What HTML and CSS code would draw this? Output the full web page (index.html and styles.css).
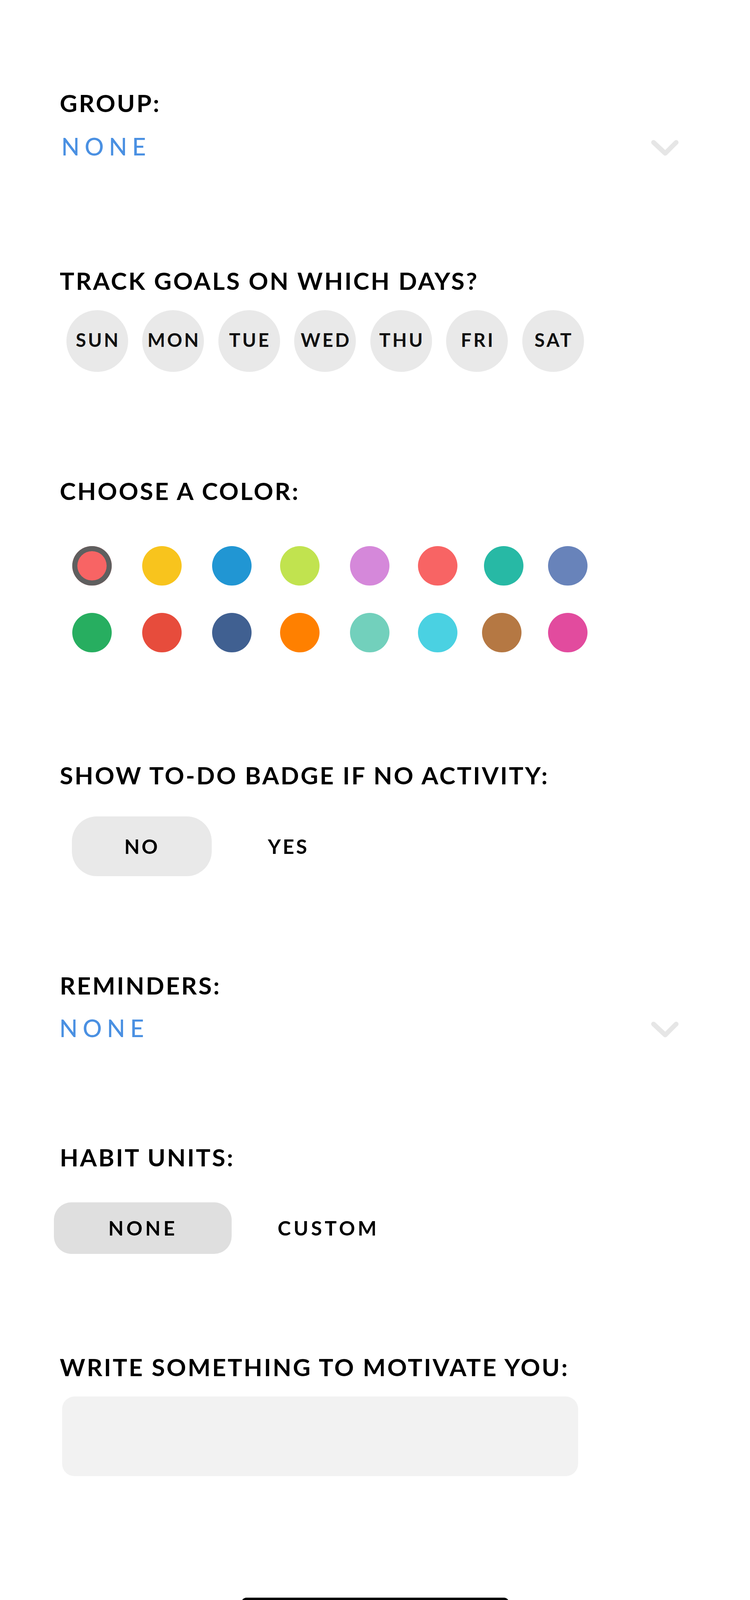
FILE: index.html
```html
<!DOCTYPE html>
<html lang="en">
<head>
<meta charset="utf-8">
<title>Habit settings</title>
<link rel="stylesheet" href="styles.css">
</head>
<body>
<div class="screen">
  <div class="label label-first">GROUP:</div>
  <div class="select select-group">
    <span class="select-value">NONE</span>
    <svg class="chevron" viewBox="0 0 90 61" width="90" height="61" aria-hidden="true"><polyline points="15,20.5 45,48.5 73,20.5"/></svg>
  </div>

  <div class="label label-days">TRACK GOALS ON WHICH DAYS?</div>
  <div class="days">
    <div class="day">SUN</div>
    <div class="day">MON</div>
    <div class="day">TUE</div>
    <div class="day">WED</div>
    <div class="day">THU</div>
    <div class="day">FRI</div>
    <div class="day">SAT</div>
  </div>

  <div class="label label-color">CHOOSE A COLOR:</div>
  <div class="colors">
    <div class="dot dot-selected" style="background:#f86464"></div>
    <div class="dot" style="background:#f8c41d"></div>
    <div class="dot" style="background:#2196d3"></div>
    <div class="dot" style="background:#c1e34f"></div>
    <div class="dot" style="background:#d588da"></div>
    <div class="dot" style="background:#f86464"></div>
    <div class="dot" style="background:#27b9a5"></div>
    <div class="dot" style="background:#6883ba"></div>
    <div class="dot" style="background:#27ae60"></div>
    <div class="dot" style="background:#e74c3c"></div>
    <div class="dot" style="background:#406091"></div>
    <div class="dot" style="background:#ff8000"></div>
    <div class="dot" style="background:#72d0bc"></div>
    <div class="dot" style="background:#4ad1e2"></div>
    <div class="dot dot-shift" style="background:#b57843"></div>
    <div class="dot" style="background:#e24b9e"></div>
  </div>

  <div class="label label-badge">SHOW TO-DO BADGE IF NO ACTIVITY:</div>
  <div class="toggle">
    <div class="toggle-option is-active">NO</div>
    <div class="toggle-option">YES</div>
  </div>

  <div class="label label-reminders">REMINDERS:</div>
  <div class="select select-reminders">
    <span class="select-value">NONE</span>
    <svg class="chevron" viewBox="0 0 90 61" width="90" height="61" aria-hidden="true"><polyline points="15,20.5 45,48.5 73,20.5"/></svg>
  </div>

  <div class="label label-units">HABIT UNITS:</div>
  <div class="units">
    <div class="units-option is-active">NONE</div>
    <div class="units-option">CUSTOM</div>
  </div>

  <div class="label label-motivate">WRITE SOMETHING TO MOTIVATE YOU:</div>
  <div class="textbox"></div>

  <div class="home-indicator"></div>
</div>
</body>
</html>
```

FILE: styles.css
```css
html, body {
  margin: 0;
  padding: 0;
  background: #ffffff;
}

body {
  font-family: Lato, "Noto Sans", sans-serif;
  color: #000000;
}

.screen {
  width: 1920px;
  height: 4157px;
  padding-top: 232px;
  box-sizing: border-box;
  display: flex;
  flex-direction: column;
  align-items: flex-start;
}

.label {
  font-size: 62px;
  line-height: 62px;
  font-weight: 700;
  letter-spacing: 4px;
  margin-left: 153px;
  white-space: nowrap;
}

.label-days { margin-top: 282px; }
.label-color { margin-top: 273px; }
.label-badge { margin-top: 283px; }
.label-reminders { margin-top: 248px; }
.label-units { margin-top: 269px; }
.label-motivate { margin-top: 258px; }

/* dropdown rows */
.select {
  align-self: stretch;
  display: flex;
  align-items: center;
  justify-content: space-between;
  height: 61px;
  margin-right: 172px;
}

.select-group {
  margin-top: 50px;
  margin-left: 157px;
}

.select-reminders {
  margin-top: 48px;
  margin-left: 152px;
}

.select-value {
  font-size: 61px;
  line-height: 61px;
  font-weight: 500;
  letter-spacing: 13px;
  color: #4a90e2;
}

.chevron {
  display: block;
  fill: none;
  stroke: #e6e6e6;
  stroke-width: 12;
  stroke-linecap: round;
  stroke-linejoin: round;
}

/* day circles */
.days {
  display: flex;
  gap: 36.5px;
  margin-top: 44.6px;
  margin-left: 169.5px;
}

.day {
  width: 158px;
  height: 158px;
  border-radius: 50%;
  background: #e9e9e9;
  display: flex;
  align-items: center;
  justify-content: center;
  box-sizing: border-box;
  padding-bottom: 6px;
  font-size: 48px;
  line-height: 48px;
  font-weight: 700;
  letter-spacing: 5px;
  text-indent: 5px;
  color: #111111;
}

/* colour palette */
.colors {
  display: grid;
  grid-template-columns: 179px 179px 174px 179px 174px 169px 164px 101px;
  row-gap: 70px;
  margin-top: 111px;
  margin-left: 185px;
}

.dot {
  width: 101px;
  height: 101px;
  border-radius: 50%;
}

.dot-selected {
  box-shadow: inset 0 0 0 13px #5f5f5f;
}

.dot-shift {
  margin-left: -5px;
}

/* NO / YES toggle */
.toggle {
  display: flex;
  gap: 17px;
  margin-top: 75px;
  margin-left: 184.4px;
}

.toggle-option {
  width: 358px;
  height: 153px;
  border-radius: 64px;
  display: flex;
  align-items: center;
  justify-content: center;
  font-size: 51px;
  line-height: 51px;
  font-weight: 700;
  letter-spacing: 5px;
  color: #000000;
}

.toggle-option.is-active {
  background: #e9e9e9;
}

/* units */
.units {
  display: flex;
  gap: 20px;
  margin-top: 85px;
  margin-left: 138.4px;
}

.units-option {
  width: 455px;
  height: 132.7px;
  border-radius: 45px;
  display: flex;
  align-items: center;
  justify-content: center;
  font-size: 51px;
  line-height: 51px;
  font-weight: 700;
  letter-spacing: 7px;
  color: #000000;
}

.units-option.is-active {
  background: #dfdfdf;
}

/* motivation input */
.textbox {
  width: 1321px;
  height: 204px;
  margin-top: 45px;
  margin-left: 159px;
  border-radius: 32px;
  background: #f2f2f2;
}

.home-indicator {
  align-self: center;
  width: 685px;
  height: 26px;
  margin-top: 311px;
  border-radius: 13px;
  background: #000000;
}
```
